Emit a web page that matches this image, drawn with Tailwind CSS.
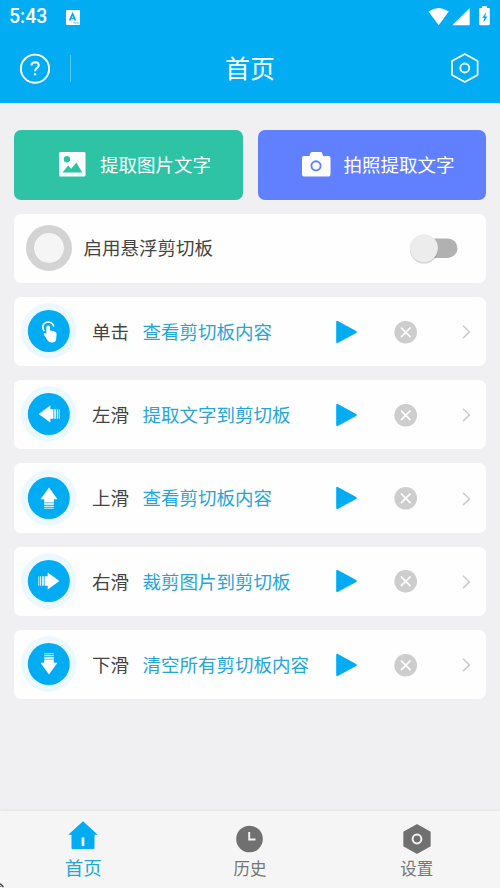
<!DOCTYPE html>
<html lang="zh-CN">
<head>
<meta charset="utf-8">
<meta name="viewport" content="width=device-width, initial-scale=1">
<title>首页</title>
<script src="https://cdn.jsdelivr.net/npm/@tailwindcss/browser@4"></script>
</head>
<body class="overflow-hidden">
<svg class="hidden">
  <defs>
    <g id="disc"><circle cx="27.8" cy="28" r="27.7" fill="#ebf8fe"/><circle cx="27.8" cy="28" r="21" fill="#02acf2"/></g>
    <g id="arrow" fill="#fff"><path d="M17.6 28 29.3 19.5V23.2H32.4V32.8H29.3V36.5Z"/><path d="M33.1 23.2h1.9v9.6h-1.9zM35.8 23.2h1.3v9.6h-1.3zM37.8 23.2h.9v9.6h-.9z" fill-opacity=".8"/></g>
    <path id="play" d="M.2 2.3Q.2 .1 2.2 1.2L20.2 11Q21.7 12 20.2 13L2.2 22.8Q.2 23.9 .2 21.7Z" fill="#02acf2"/>
    <g id="clear"><circle cx="11.7" cy="12.3" r="11.3" fill="#cdcdcd"/><path d="M7.4 8l8.6 8.6M16 8l-8.6 8.6" stroke="#fff" stroke-width="1.7" stroke-linecap="round"/></g>
    <path id="chev" d="M1 1.7 7.5 7.9 1 14.1" fill="none" stroke="#cbcbcb" stroke-width="1.5"/>
  </defs>
</svg>
<div class="relative flex flex-col w-[500px] h-[888px] bg-[#f0f0f3] font-['Noto_Sans_CJK_SC',sans-serif] text-[18.5px] leading-none text-[#444]">
  <header class="h-[102.5px] shrink-0 bg-[#02acf2] text-white flex flex-col">
    <div class="h-[34px] flex items-center pl-[9px] pr-[9px]">
      <span class="font-[Roboto,sans-serif] font-medium text-[19.5px] w-[57px]">5:43</span>
      <svg width="14" height="15" viewBox="0 0 14 15"><rect width="14" height="15" rx="1" fill="#fff"/><path d="M3.7 10.5 6.6 3.8 9.5 10.5M4.8 8.5h3.8" stroke="#02acf2" stroke-width="1.7" fill="none"/><path d="M7.5 12.9h5" stroke="#02acf2" stroke-dasharray="1.2 .7"/></svg>
      <svg class="ml-auto mt-[-2px]" width="64" height="20" viewBox="0 0 64 20" fill="#fff"><path d="M1.5 4.2Q11.5-2.8 21.8 4.2L11.7 18Z" transform="translate(0 1.2)"/><path d="M42.7 2.3V19.2H25.3Z"/><path d="M55 .2h5v1.8h1.8q1 0 1 1v15.2q0 1-1 1h-8.6q-1 0-1-1V3q0-1 1-1h1.8z"/><path d="M59.3 6.2 55.2 11.8h2l-.7 4.6 4-5.9h-2.2Z" fill="#02acf2"/></svg>
    </div>
    <div class="h-[68px] grid grid-cols-3 items-center px-5">
      <div class="flex items-center">
        <svg width="30" height="31" viewBox="0 0 30 31" fill="none" stroke="#fff"><circle cx="15" cy="15.7" r="14.1" stroke-width="1.9"/><path d="M11.5 12.5Q11.5 9.3 15.2 9.3 18.8 9.4 18.8 12.2 18.8 13.8 16.9 15.1 15.1 16.3 15.1 18.3" stroke-width="2"/><circle cx="15.1" cy="21.3" r="1" fill="#fff" stroke-width=".5"/></svg>
        <div class="w-px h-[27px] ml-5 bg-white/35"></div>
      </div>
      <h1 class="text-center text-[25px] font-normal mt-[-2px]">首页</h1>
      <svg class="ml-auto" width="30" height="32" viewBox="0 0 30 32" fill="none" stroke="#fff" stroke-width="1.7"><path d="M14.8 2 27.6 9V23L14.8 30 2 23V9Z" stroke-linejoin="round"/><circle cx="14.8" cy="16" r="4.5" stroke-width="1.8"/></svg>
    </div>
  </header>

  <main class="flex-1 flex flex-col gap-[14px] px-[14px] pt-[27.8px]">
    <div class="flex gap-[15px] h-[69.3px] text-white">
      <div class="w-[228.5px] rounded-[7px] bg-[#2dc3a4] flex items-center pl-[45px]">
        <svg width="27" height="25" viewBox="0 0 27 25"><rect width="26.5" height="24.5" rx="1.5" fill="#fff"/><circle cx="8" cy="7.3" r="3.2" fill="#2dc3a4"/><path d="M3.5 20.5 9.2 13.5 12.2 16.7 17.3 10.5 23.2 20.5Z" fill="#2dc3a4"/></svg>
        <span class="ml-[14px] mt-[-2px]">提取图片文字</span>
      </div>
      <div class="w-[228.5px] rounded-[7px] bg-[#6180ff] flex items-center pl-[44px]">
        <svg width="29" height="25" viewBox="0 0 29 25"><path d="M2 4H7.3L8.5 1Q8.9 0 10 0H18.5Q19.6 0 20 1L21.2 4H26.5Q28.5 4 28.5 6V22.5Q28.5 24.5 26.5 24.5H2Q0 24.5 0 22.5V6Q0 4 2 4Z" fill="#fff"/><circle cx="14" cy="13.8" r="4.6" fill="none" stroke="#6180ff" stroke-width="1.9"/></svg>
        <span class="ml-[13px] mt-[-2px]">拍照提取文字</span>
      </div>
    </div>

    <div class="h-[69.3px] rounded-[7px] bg-[#fefefe] flex items-center pl-[12px] pr-[28px]">
      <div class="size-[45.5px] rounded-full border-[8px] border-[#d3d3d3] bg-[#f5f5f5]"></div>
      <span class="ml-[12px] mt-[-1px]">启用悬浮剪切板</span>
      <svg class="ml-auto" width="50" height="34" viewBox="0 0 50 34"><rect x="11" y="7.5" width="38.5" height="19.4" rx="9.7" fill="#b1b1b1"/><circle cx="16" cy="18.4" r="14.2" fill="#000" fill-opacity=".16"/><circle cx="16" cy="17.2" r="14" fill="#ececec"/></svg>
    </div>

    <div class="h-[69.3px] rounded-[7px] bg-[#fefefe] flex items-center pl-[7px] pr-[14px]">
      <svg class="mt-[-1px]" width="56" height="56" viewBox="0 0 56 56"><use href="#disc"/><path d="M23.3 28Q21.4 26.2 21.8 23.5 22.8 19.3 27.2 19 31.6 19.2 32.8 23.5" fill="none" stroke="#fff" stroke-width="1.6"/><path d="M25.3 24.3Q25.4 22.6 27.2 22.5 29 22.6 29.1 24.3V27.4L33.8 28.5Q35.7 29 35.6 31L35.1 36.5Q34.5 39.5 31.5 39.6 27.8 39.8 26.3 37L22.8 31.6Q22.4 30.2 23.7 30 24.6 29.9 25.3 31Z" fill="#fff"/></svg>
      <span class="ml-[15px] mt-[-1px] w-[50.5px]">单击</span><span class="w-[193px] mt-[-1px] text-[#25a5d8]">查看剪切板内容</span>
      <svg width="22" height="24"><use href="#play"/></svg><svg class="ml-[36px]" width="24" height="24"><use href="#clear"/></svg><svg class="ml-auto" width="10" height="15"><use href="#chev"/></svg>
    </div>
    <div class="h-[69.3px] rounded-[7px] bg-[#fefefe] flex items-center pl-[7px] pr-[14px]">
      <svg class="mt-[-1px]" width="56" height="56" viewBox="0 0 56 56"><use href="#disc"/><use href="#arrow"/></svg>
      <span class="ml-[15px] mt-[-1px] w-[50.5px]">左滑</span><span class="w-[193px] mt-[-1px] text-[#25a5d8]">提取文字到剪切板</span>
      <svg width="22" height="24"><use href="#play"/></svg><svg class="ml-[36px]" width="24" height="24"><use href="#clear"/></svg><svg class="ml-auto" width="10" height="15"><use href="#chev"/></svg>
    </div>
    <div class="h-[69.3px] rounded-[7px] bg-[#fefefe] flex items-center pl-[7px] pr-[14px]">
      <svg class="mt-[-1px]" width="56" height="56" viewBox="0 0 56 56"><use href="#disc"/><use href="#arrow" transform="rotate(90 28 28)"/></svg>
      <span class="ml-[15px] mt-[-1px] w-[50.5px]">上滑</span><span class="w-[193px] mt-[-1px] text-[#25a5d8]">查看剪切板内容</span>
      <svg width="22" height="24"><use href="#play"/></svg><svg class="ml-[36px]" width="24" height="24"><use href="#clear"/></svg><svg class="ml-auto" width="10" height="15"><use href="#chev"/></svg>
    </div>
    <div class="h-[69.3px] rounded-[7px] bg-[#fefefe] flex items-center pl-[7px] pr-[14px]">
      <svg class="mt-[-1px]" width="56" height="56" viewBox="0 0 56 56"><use href="#disc"/><use href="#arrow" transform="rotate(180 28 28)"/></svg>
      <span class="ml-[15px] mt-[-1px] w-[50.5px]">右滑</span><span class="w-[193px] mt-[-1px] text-[#25a5d8]">裁剪图片到剪切板</span>
      <svg width="22" height="24"><use href="#play"/></svg><svg class="ml-[36px]" width="24" height="24"><use href="#clear"/></svg><svg class="ml-auto" width="10" height="15"><use href="#chev"/></svg>
    </div>
    <div class="h-[69.3px] rounded-[7px] bg-[#fefefe] flex items-center pl-[7px] pr-[14px]">
      <svg class="mt-[-1px]" width="56" height="56" viewBox="0 0 56 56"><use href="#disc"/><use href="#arrow" transform="rotate(270 28 28)"/></svg>
      <span class="ml-[15px] mt-[-1px] w-[50.5px]">下滑</span><span class="w-[193px] mt-[-1px] text-[#25a5d8]">清空所有剪切板内容</span>
      <svg width="22" height="24"><use href="#play"/></svg><svg class="ml-[36px]" width="24" height="24"><use href="#clear"/></svg><svg class="ml-auto" width="10" height="15"><use href="#chev"/></svg>
    </div>
  </main>

  <nav class="h-[77px] shrink-0 bg-[#f5f5f5] shadow-[0_-1px_3px_rgba(0,0,0,0.06)] grid grid-cols-3 text-[16.5px] text-[#767676]">
    <div class="flex flex-col items-center pt-[10px] text-[18.5px] text-[#25a5d8]">
      <svg width="30" height="28" viewBox="0 0 30 28"><path d="M15 .3 29.7 13.7H26.5V26.7Q26.5 27.9 25.3 27.9H4.7Q3.5 27.9 3.5 26.7V13.7H.3Z" fill="#02acf2"/><rect x="13.6" y="16.3" width="2.8" height="9" rx="1" fill="#e8f6fc"/></svg>
      <span class="mt-[9px]">首页</span>
    </div>
    <div class="flex flex-col items-center pt-[14px]">
      <svg width="27" height="28" viewBox="0 0 27 28"><circle cx="13.5" cy="14" r="13.3" fill="#707070"/><path d="M13.2 7V14.5H19.5" fill="none" stroke="#f5f5f5" stroke-width="1.9"/></svg>
      <span class="mt-[7px]">历史</span>
    </div>
    <div class="flex flex-col items-center pt-[13px]">
      <svg width="28" height="30" viewBox="0 0 28 30"><path d="M14 .8 27 8V22L14 29.2 1 22V8Z" fill="#707070" stroke="#707070" stroke-width="1.3" stroke-linejoin="round"/><circle cx="14" cy="15" r="4.4" fill="none" stroke="#f5f5f5" stroke-width="2"/></svg>
      <span class="mt-[6px]">设置</span>
    </div>
  </nav>
  <svg class="absolute left-0 bottom-0" width="5" height="5"><path d="M0 .5 3.5 4" stroke="#444" stroke-width="1.4"/><path d="M0 3.5h1.5" stroke="#777"/></svg>
</div>
</body>
</html>
